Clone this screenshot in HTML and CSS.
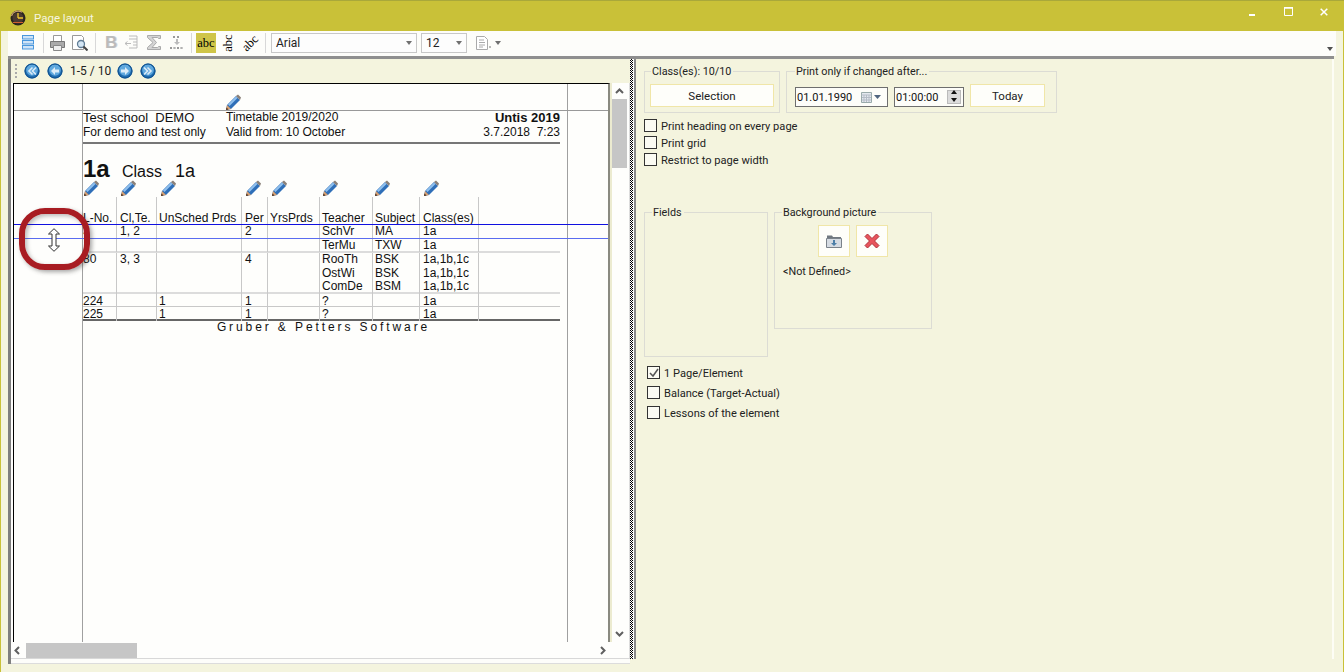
FILE: index.html
```html
<!DOCTYPE html>
<html lang="en">
<head>
<meta charset="utf-8">
<title>Page layout</title>
<link rel="stylesheet" href="styles.css">
</head>
<body>
<svg class="defs" width="0" height="0" aria-hidden="true">
  <symbol id="pencil" viewBox="0 0 17 17">
    <path d="M1 16l1-5L11 2l4 4-9 9z" fill="#2f6fb8"/>
    <path d="M3 10.500L11 2.500l1.500 1.500-8 8z" fill="#8fc0ee"/>
    <path d="M11 2l2-1.500 3 3L15 6z" fill="#8a8078"/>
    <path d="M1 16l1-5 4 4z" fill="#d8a070"/>
    <path d="M1 16l.5-2.500 2 2z" fill="#4a3020"/>
  </symbol>
  <symbol id="navbtn" viewBox="0 0 16 16">
    <circle cx="8" cy="8" r="7.500" fill="#1f6cb0"/>
    <circle cx="8" cy="7" r="5.800" fill="#5fa8de"/>
    <circle cx="8" cy="8" r="7" fill="none" stroke="#0f4f8c"/>
  </symbol>
</svg>
<div class="window">
  <header class="titlebar">
    <svg class="app-icon" viewBox="0 0 16 16" width="16" height="16">
      <circle cx="8" cy="8" r="7.500" fill="#2a2420"/>
      <circle cx="8" cy="8" r="5.500" fill="#4a3a30"/>
      <path d="M1.500 6A7 7 0 0 1 12 2.300" fill="none" stroke="#c9a070" stroke-width="1.200"/>
      <path d="M8 8V3M8 8h5" stroke="#f0c830" stroke-width="1.300"/>
      <path d="M3 12.500h10" stroke="#d06030" stroke-width="1"/>
    </svg>
    <span class="title">Page layout</span>
    <div class="win-btns">
      <svg viewBox="0 0 8 8" width="8" height="8"><path d="M1 6h6v2H1z" fill="#fff"/></svg>
      <svg viewBox="0 0 9 9" width="9" height="9"><path d="M.5 1h8v7.500h-8z" fill="none" stroke="#fff"/><path d="M0 0h9v1.500H0z" fill="#fff"/></svg>
      <svg viewBox="0 0 8 8" width="8" height="8"><path d="M.7.700l6.600 6.600M7.300.700L.7 7.300" stroke="#fff" stroke-width="1.500"/></svg>
    </div>
  </header>

  <div class="toolbar">
    <svg class="tool t-list" viewBox="0 0 12 15" width="12" height="15"><g fill="#cfe4f7" stroke="#4a97dc"><rect x=".5" y=".5" width="11" height="3.500"/><rect x=".5" y="5.500" width="11" height="3.500"/><rect x=".5" y="10.500" width="11" height="3.500"/></g></svg>
    <i class="sep s1"></i>
    <svg class="tool t-print" viewBox="0 0 15 16" width="15" height="16"><path d="M3.500.5h8v6h-8z" fill="#fff" stroke="#999"/><path d="M.5 6.500h14v6h-14z" fill="#aaa" stroke="#777"/><path d="M3.500 10.500h8v5h-8z" fill="#eee" stroke="#888"/></svg>
    <svg class="tool t-prev" viewBox="0 0 16 16" width="16" height="16"><path d="M.5.500h9l2 2v12H.5z" fill="#fff" stroke="#999"/><circle cx="9" cy="9" r="3.500" fill="#d4e6f4" stroke="#607d95" stroke-width="1.300"/><path d="M11.500 11.500l4 4" stroke="#444" stroke-width="2"/></svg>
    <i class="sep s2"></i>
    <span class="tool t-b">B</span>
    <svg class="tool t-ind" viewBox="0 0 14 15" width="14" height="15"><path d="M5 1h8M5 4h8M9 7h4M9 10h4M5 13h8M13 1v12" stroke="#bbb" fill="none"/><path d="M7 8.500H1l2.500-2M1 8.500l2.500 2" stroke="#bbb" fill="none"/></svg>
    <svg class="tool t-sig" viewBox="0 0 14 15" width="14" height="15"><path d="M.5.500h13v3h-2l-1-1H5l4.500 5L5 12.500h5.500l1-1h2v3H.5v-2L6 7.500.5 2.500z" fill="#d4d4d4" stroke="#aaa"/></svg>
    <svg class="tool t-xx" viewBox="0 0 16 15" width="16" height="15"><path d="M4 1l2 2M6 1L4 3M8 1l2 2M10 1L8 3M1 12l2 2M3 12l-2 2M4.500 12l2 2M6.500 12l-2 2M8 12l2 2M10 12l-2 2M11.500 12l2 2M13.500 12l-2 2" stroke="#999" fill="none"/><path d="M7 4h2v3h2L8 10 5 7h2z" fill="#bbb"/></svg>
    <i class="sep s3"></i>
    <span class="abc active">abc</span>
    <span class="abc rot90">abc</span>
    <span class="abc rot45">abc</span>
    <i class="sep s4"></i>
    <div class="combo c-font"><span>Arial</span><b class="caret"></b></div>
    <div class="combo c-size"><span>12</span><b class="caret"></b></div>
    <svg class="tool t-doc" viewBox="0 0 15 14" width="15" height="14"><path d="M.5.500h8l3 3v10h-11z" fill="#fff" stroke="#aaa"/><path d="M3 4h5M3 6.500h6M3 9h6M3 11h4" stroke="#aaa"/><path d="M14 10v2" stroke="#777"/></svg>
    <b class="caret t-docc"></b>
    <b class="caret t-more"></b>
  </div>

  <main class="main">
    <section class="left">
      <div class="navbar">
        <i class="grip"></i>
        <svg class="nav n1" width="16" height="16"><use href="#navbtn"/><path d="M8.500 4.500L5 8l3.500 3.500M12 4.500L8.500 8l3.500 3.500" stroke="#dcecf8" stroke-width="1.600" fill="none"/></svg>
        <svg class="nav n2" width="16" height="16"><use href="#navbtn"/><path d="M8 4L4 8l4 4V9.500h4v-3H8z" fill="#dcecf8"/></svg>
        <span class="pages">1-5 / 10</span>
        <svg class="nav n3" width="16" height="16"><use href="#navbtn"/><path d="M8 4l4 4-4 4V9.500H4v-3h4z" fill="#dcecf8"/></svg>
        <svg class="nav n4" width="16" height="16"><use href="#navbtn"/><path d="M7.500 4.500L11 8l-3.500 3.500M4 4.500L7.500 8 4 11.500" stroke="#dcecf8" stroke-width="1.600" fill="none"/></svg>
      </div>
      <div class="view">
        <div class="page">
          <div class="gutter"></div>
          <div class="sheet">
            <div class="pen-top"><svg class="pen" width="17" height="17"><use href="#pencil"/></svg></div>
            <div class="head">
              <div class="head-row"><span class="h-a big">Test school&nbsp;&nbsp;DEMO</span><span class="h-b">Timetable 2019/2020</span><strong class="h-c big">Untis 2019</strong></div>
              <div class="head-row"><span class="h-a">For demo and test only</span><span class="h-b">Valid from: 10 October</span><span class="h-c">3.7.2018&nbsp; 7:23</span></div>
            </div>
            <div class="name"><strong>1a</strong><span class="n-class">Class</span><span class="n-val">1a</span></div>
            <div class="pens">
              <svg class="pen" width="17" height="17"><use href="#pencil"/></svg>
              <svg class="pen" width="17" height="17"><use href="#pencil"/></svg>
              <svg class="pen" width="17" height="17"><use href="#pencil"/></svg>
              <svg class="pen" width="17" height="17"><use href="#pencil"/></svg>
              <svg class="pen" width="17" height="17"><use href="#pencil"/></svg>
              <svg class="pen" width="17" height="17"><use href="#pencil"/></svg>
              <svg class="pen" width="17" height="17"><use href="#pencil"/></svg>
              <svg class="pen" width="17" height="17"><use href="#pencil"/></svg>
            </div>
            <div class="tr th"><span>L-No.</span><span>Cl,Te.</span><span>UnSched Prds</span><span>Per</span><span>YrsPrds</span><span>Teacher</span><span>Subject</span><span>Class(es)</span><span></span></div>
            <div class="tr"><span>3</span><span>1, 2</span><span></span><span>2</span><span></span><span>SchVr</span><span>MA</span><span>1a</span><span></span></div>
            <div class="tr sep-soft"><span></span><span></span><span></span><span></span><span></span><span>TerMu</span><span>TXW</span><span>1a</span><span></span></div>
            <div class="tr tri"><span>80</span><span>3, 3</span><span></span><span>4</span><span></span><span>RooTh<br>OstWi<br>ComDe</span><span>BSK<br>BSK<br>BSM</span><span>1a,1b,1c<br>1a,1b,1c<br>1a,1b,1c</span><span></span></div>
            <div class="tr sep-thin"><span>224</span><span></span><span>1</span><span>1</span><span></span><span>?</span><span></span><span>1a</span><span></span></div>
            <div class="tr sep-dark"><span>225</span><span></span><span>1</span><span>1</span><span></span><span>?</span><span></span><span>1a</span><span></span></div>
            <div class="foot">Gruber &amp; Petters Software</div>
          </div>
          <div class="gutter-r"></div>
          <i class="rule"></i>
          <i class="rule-blue b1"></i>
          <i class="rule-blue b2"></i>
          <i class="mark"></i>
          <svg class="cursor" viewBox="0 0 14 24" width="14" height="24"><path d="M7 .7L12.500 6H9v12h3.500L7 23.300 1.500 18H5V6H1.500z" fill="#fff" stroke="#333"/></svg>
        </div>
        <div class="vscroll"><svg class="arr" viewBox="0 0 9 6" width="9" height="6"><path d="M1 5l3.500-3.500L8 5" fill="none" stroke="#606060" stroke-width="2"/></svg><i class="vthumb"></i><svg class="arr arr-end" viewBox="0 0 9 6" width="9" height="6"><path d="M1 1l3.500 3.500L8 1" fill="none" stroke="#606060" stroke-width="2"/></svg></div>
        <div class="hscroll"><svg class="arr" viewBox="0 0 6 9" width="6" height="9"><path d="M5 1L1.500 4.500 5 8" fill="none" stroke="#606060" stroke-width="2"/></svg><i class="hthumb"></i><svg class="arr arr-end" viewBox="0 0 6 9" width="6" height="9"><path d="M1 1l3.500 3.500L1 8" fill="none" stroke="#606060" stroke-width="2"/></svg></div>
      </div>
    </section>
    <div class="splitter"></div>
    <section class="right">
      <div class="groups-a">
        <fieldset class="grp g-class">
          <legend>Class(es): 10/10</legend>
          <button class="btn b-sel">Selection</button>
        </fieldset>
        <fieldset class="grp g-print">
          <legend>Print only if changed after...</legend>
          <div class="print-row">
            <div class="field f-date"><span>01.01.1990</span>
              <svg viewBox="0 0 11 11" width="11" height="11"><path d="M.5.500h10v10H.5z" fill="#e4e8ee" stroke="#9aa"/><path d="M.5 3h10M3 3v7M5.500 3v7M8 3v7M1 5.500h9M1 8h9" stroke="#b5bcc6"/></svg>
              <svg viewBox="0 0 7 4" width="7" height="4"><path d="M0 0h7L3.500 4z" fill="#50657f"/></svg>
            </div>
            <div class="field f-time"><span>01:00:00</span>
              <div class="spin"><i class="up"></i><i class="down"></i></div>
            </div>
            <button class="btn b-today">Today</button>
          </div>
        </fieldset>
      </div>
      <div class="checks c-top">
        <label class="chk"><i class="box"></i>Print heading on every page</label>
        <label class="chk"><i class="box"></i>Print grid</label>
        <label class="chk"><i class="box"></i>Restrict to page width</label>
      </div>
      <div class="groups-b">
        <fieldset class="grp g-fields"><legend>Fields</legend></fieldset>
        <fieldset class="grp g-bg">
          <legend>Background picture</legend>
          <div class="pic-btns">
            <button class="btn b-pic"><svg viewBox="0 0 16 14" width="16" height="14"><path d="M1 3V1.500h5L7 3h8v2H1z" fill="#707880"/><path d="M.5 4.500h15v9H.5z" fill="#d5dbe2" stroke="#7a828a"/><path d="M7 6h2v3h2l-3 3-3-3h2z" fill="#4c7fa8"/></svg></button>
            <button class="btn b-pic"><svg viewBox="0 0 16 16" width="16" height="16"><path d="M1 3.500L3.500 1 8 5.500 12.500 1 15 3.500 10.500 8l4.500 4.500-2.500 2.500L8 10.500 3.500 15 1 12.500 5.500 8z" fill="#e8545c" stroke="#b03038" stroke-linejoin="round"/></svg></button>
          </div>
          <div class="undef">&lt;Not Defined&gt;</div>
        </fieldset>
      </div>
      <div class="checks c-bot">
        <label class="chk"><i class="box on"><svg viewBox="0 0 12 12" width="12" height="12"><path d="M2 6l3 3 5-7" fill="none" stroke="#555" stroke-width="1.500"/></svg></i>1 Page/Element</label>
        <label class="chk"><i class="box"></i>Balance (Target-Actual)</label>
        <label class="chk"><i class="box"></i>Lessons of the element</label>
      </div>
    </section>
  </main>
</div>
</body>
</html>
```

FILE: styles.css
```css
* { box-sizing: border-box; }
html, body { margin: 0; padding: 0; }
body { width: 1344px; height: 672px; overflow: hidden; font-family: "Liberation Sans", Arial, sans-serif; font-size: 12px; color: #111; }
.defs { position: absolute; }
i, b { display: block; font-style: normal; }

.window { width: 1344px; height: 672px; display: flex; flex-direction: column; background: #f4f4de; border-left: 1px solid #c9c138; border-right: 1px solid #c9c138; }

.titlebar { height: 31px; flex: none; margin: 0 -1px; background: #c9c138; border-top: 1px solid #a9a83a; display: flex; align-items: center; padding: 4px 0 0 10px; }
.app-icon { margin-right: 8px; }
.title { color: #f6f6e0; font-family: Roboto, sans-serif; font-size: 11.500px; }
.win-btns { margin-left: auto; display: flex; gap: 28px; align-items: center; padding-right: 16px; align-self: flex-start; margin-top: 2px; }
.win-btns svg:last-child { margin-left: -1px; }

.toolbar { height: 25px; flex: none; margin: 0 7px 0 7px; padding-bottom: 1px; background: #fdfdfa; position: relative; display: flex; align-items: center; }
.toolbar > * { flex: none; }
.tool { margin-bottom: 1px; }
.t-list { margin-left: 14px; }
.sep { width: 1px; height: 20px; background: #d8d8d8; }
.s1 { margin: 0 6px 0 9px; }
.t-print { margin-right: 7px; }
.s2 { margin: 0 9px 0 7px; }
.t-b { width: 10px; font-weight: bold; font-size: 17px; line-height: 17px; color: #bbb; text-shadow: 1px 0 #ddd; margin-right: 9px; }
.t-ind { margin-right: 9px; }
.t-sig { margin-right: 8px; }
.s3 { margin: 0 4px 0 6px; }
.abc { width: 20px; height: 20px; line-height: 20px; text-align: center; font-family: "Liberation Serif", serif; font-size: 12.500px; color: #000; }
.active { background: #cfc548; margin-right: 2px; }
.rot90 { transform: rotate(-90deg); margin-right: 2px; }
.rot45 { transform: rotate(-45deg); }
.s4 { margin: 0 5px 0 5px; }
.combo { height: 20px; border: 1px solid #c8c8c8; background: #fdfdfd; display: flex; align-items: center; justify-content: space-between; padding: 0 4px 0 4px; font-family: Roboto, sans-serif; font-size: 12px; color: #222; }
.c-font { width: 146px; margin-right: 4px; }
.c-size { width: 46px; margin-right: 9px; }
.caret { width: 0; height: 0; border: 3px solid transparent; border-top: 4px solid #707070; border-bottom: 0; }
.t-docc { margin-left: 4px; }
.t-more { position: absolute; right: 3px; top: 16px; border-top-color: #505050; }

.main { flex: 1; display: flex; margin: 0 9px 8px 7px; border-top: 3px solid #8f8f8f; min-height: 0; }

.left { width: 622px; flex: none; display: flex; flex-direction: column; border-left: 3px solid #7f7f7f; }
.left::after { content: ""; height: 4px; flex: none; background: #fdfdfa; border-bottom: 1px solid #dcdcdc; }
.navbar { height: 24px; flex: none; display: flex; align-items: center; }
.grip { width: 2px; height: 14px; margin: 0 7px 0 4px; background: repeating-linear-gradient(#aaa 0 2px, transparent 2px 4px); }
.nav { flex: none; }
.n2 { margin-left: 7px; }
.pages { margin: 0 7px; width: 40px; font-family: Roboto, sans-serif; font-size: 12px; color: #222; white-space: nowrap; }
.n4 { margin-left: 7px; }

.view { flex: 1; min-height: 0; display: grid; grid-template-columns: 1fr 17px; grid-template-rows: 1fr 16px; background: #fefefc; border-bottom: 1px solid #d8d8d8; border-right: 1px solid #dcdcdc; padding-left: 2px; }
.page { position: relative; width: 597px; background: #fefefc; border-top: 1px solid #000; border-left: 1px solid #000; border-right: 2px solid #8a8a80; display: flex; box-shadow: 2px 0 0 #ecebd0; }
.gutter { width: 69px; flex: none; border-right: 1px solid #a0a0a0; }
.sheet { width: 484px; flex: none; padding-right: 7px; }
.gutter-r { flex: 1; border-left: 1px solid #a0a0a0; }

.pen-top { height: 26px; padding: 10px 0 0 142px; }
.pen { display: block; flex: none; }
.head { border-bottom: 2px solid #777; height: 34px; }
.head-row { height: 15px; line-height: 15px; display: flex; white-space: nowrap; }
.h-a { width: 143px; }
.h-c { margin-left: auto; }
.big { font-size: 13px; }
.name { height: 36px; display: flex; align-items: baseline; padding-top: 13px; white-space: nowrap; }
.name strong { font-size: 24px; line-height: 24px; width: 39px; }
.n-class { font-size: 16px; width: 53px; }
.n-val { font-size: 18px; }
.pens { height: 17px; display: grid; grid-template-columns: 37px 40px 85px 26px 51px 52px 49px 20px; }

.tr { display: grid; grid-template-columns: 34px 40px 85px 26px 52px 53px 47px 59px 81px; width: 477px; height: 14px; line-height: 14px; }
.tr > span { border-right: 1px solid #c8c8c8; padding-left: 3px; white-space: nowrap; }
.tr > span:first-child { padding-left: 0; }
.tr > span:last-child { border-right: 0; }
.tr > span:nth-child(3), .tr > span:nth-child(5), .tr > span:nth-child(6), .tr > span:nth-child(7) { padding-left: 2px; }
.th { height: 27px; }
.th > span { padding-top: 15px; line-height: 13px; }
.sep-soft { height: 15px; border-bottom: 2px solid #dcdcdc; }
.tri { height: 41px; line-height: 13.500px; border-bottom: 2px solid #dcdcdc; }
.sep-thin { height: 13px; border-bottom: 1px solid #c8c8c8; }
.sep-dark { border-bottom: 2px solid #666; }
.foot { text-align: center; letter-spacing: 2.900px; line-height: 13px; padding-left: 4px; }

.rule { position: absolute; left: 0; right: 0; top: 26px; height: 1px; background: #999; }
.rule-blue { position: absolute; left: 0; right: 0; height: 1px; background: #1010e0; }
.b1 { top: 140px; }
.b2 { top: 154px; background: #5a6cf0; }
.mark { position: absolute; left: 5px; top: 124px; width: 71px; height: 62px; border: 6px solid #a81c22; border-radius: 26px; box-shadow: 2px 2px 4px rgba(60,60,60,.45), inset 2px 2px 4px rgba(60,60,60,.35); }
.cursor { position: absolute; left: 33px; top: 144px; }

.vscroll { display: flex; flex-direction: column; align-items: center; padding: 5px 0; grid-row: 1; grid-column: 2; width: 15px; }
.vscroll .arr { flex: none; }
.vthumb { width: 15px; height: 69px; background: #c6c6c6; margin-top: 5px; }
.vscroll .arr-end { margin-top: auto; }
.hscroll { grid-row: 2; grid-column: 1 / 3; display: flex; align-items: center; padding: 0 23px 0 1px; }
.hscroll .arr-end { margin-left: auto; }
.hthumb { width: 111px; height: 15px; background: #c6c6c6; margin-left: 6px; }

.splitter { width: 4px; flex: none; margin-bottom: 5px; background: repeating-conic-gradient(#000 0 25%, #fff 0 50%) 0 0 / 2px 2px; border-right: 1px solid #fff; }
.right { flex: 1; min-width: 0; margin-bottom: 5px; border-left: 2px solid #8a8a8a; border-right: 2px solid #fdfdf5; padding: 5px 0 0 8px; }
.groups-a { display: flex; gap: 6px; }
.grp { margin: 0; min-width: 0; border: 1px solid #dcdcd4; padding: 0; font-family: Roboto, sans-serif; font-size: 10.800px; }
.grp legend { padding: 2px 2px 0 1px; margin-left: 7px; line-height: 12px; color: #222; white-space: nowrap; }
.g-class { width: 136px; height: 49px; padding: 6px 0 0 5px; }
.g-class legend { margin-left: 1px; }
.g-print { width: 271px; height: 49px; padding: 6px 0 0 8px; }
.g-print legend { margin-left: 0; }
.print-row { display: flex; gap: 6px; }
.btn { display: flex; align-items: center; justify-content: center; background: #fefefa; border: 1px solid #f0e6a8; font-family: Roboto, sans-serif; font-size: 11.500px; color: #222; padding: 0; }
.b-sel { width: 124px; height: 23px; }
.b-today { width: 75px; height: 23px; }
.field { height: 20px; border: 1px solid #6e6e6e; background: #fdfdf9; display: flex; align-items: center; font-family: Roboto, sans-serif; font-size: 11px; margin-top: 3px; padding-left: 1px; }
.f-date { width: 93px; padding-right: 6px; }
.f-date svg:first-of-type { margin-left: auto; }
.f-date svg:last-of-type { margin-left: 2px; }
.f-time { width: 70px; padding-right: 2px; }
.spin { margin-left: auto; width: 14px; height: 14px; background: #dcdcdc; border: 1px solid #bbb; position: relative; }
.spin i { position: absolute; left: 3px; width: 0; height: 0; border: 3px solid transparent; }
.spin .up { top: -1px; border-bottom: 4px solid #111; border-top: 0; }
.spin .down { top: 7px; border-top: 4px solid #111; border-bottom: 0; }

.checks { display: flex; flex-direction: column; font-family: Roboto, sans-serif; font-size: 11.100px; color: #222; }
.chk { display: flex; align-items: center; height: 13px; padding-top: 1px; }
.box { width: 13px; height: 13px; flex: none; margin-top: -1px; border: 1px solid #333; background: #fbfbf3; margin-right: 4px; }
.c-top { margin-top: 6px; gap: 4px; }
.c-bot { margin-top: 9px; padding-left: 3px; gap: 7px; }
.groups-b { display: flex; gap: 6px; margin-top: 39px; align-items: flex-start; }
.g-fields { width: 124px; height: 152px; }
.g-bg { width: 158px; height: 124px; }
.pic-btns { display: flex; gap: 6px; padding: 6px 0 0 43px; }
.b-pic { width: 32px; height: 32px; }
.undef { margin: 8px 0 0 8px; color: #222; }
```
